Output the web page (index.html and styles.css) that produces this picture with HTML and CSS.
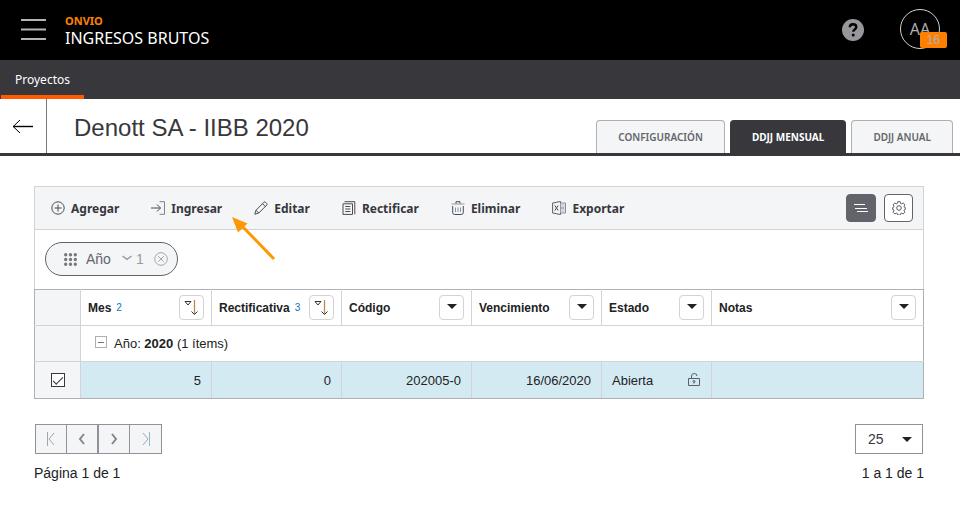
FILE: index.html
```html
<!DOCTYPE html>
<html lang="es">
<head>
    <meta charset="UTF-8">
    <meta name="viewport" content="width=device-width, initial-scale=1.0">
    <title>Onvio - Ingresos Brutos</title>
    <link rel="stylesheet" href="styles.css">
</head>
<body>
    <header class="header">
        <button type="button" class="menu-btn" aria-label="Menú">
            <svg width="25" height="22" viewBox="0 0 25 22"><path d="M0 1h25M0 10.500h25M0 20h25" stroke="#b4b4b8" stroke-width="2"/></svg>
        </button>
        <div class="brand">
            <span class="brand-name">ONVIO</span>
            <span class="brand-app">INGRESOS BRUTOS</span>
        </div>
        <button type="button" class="help-btn" aria-label="Ayuda">
            <svg width="22" height="22" viewBox="0 0 22 22"><circle cx="11" cy="11" r="11" fill="#96969b"/><path d="M7.800 8.300c0-2.200 1.500-3.100 3.200-3.100s3.300 1 3.300 2.800c0 2.300-3 2.400-3 4.700" fill="none" stroke="#000" stroke-width="2.400"/><circle cx="11.200" cy="16" r="1.500"/></svg>
        </button>
        <button type="button" class="avatar">AA<span class="badge">16</span></button>
    </header>

    <nav class="nav">
        <a href="#" class="nav-link active">Proyectos</a>
    </nav>

    <div class="title-bar">
        <a href="#" class="back" aria-label="Volver">
            <svg width="22" height="15" viewBox="0 0 22 15" fill="none" stroke="#000"><path d="M21 7.500H1" stroke-width="1.400"/><path d="M8 1L1.200 7.500 8 14"/></svg>
        </a>
        <h1>Denott SA - IIBB 2020</h1>
        <div class="tabs">
            <button type="button" class="tab">CONFIGURACIÓN</button>
            <button type="button" class="tab active">DDJJ MENSUAL</button>
            <button type="button" class="tab">DDJJ ANUAL</button>
        </div>
    </div>

    <main class="content">
        <section class="panel">
            <div class="toolbar">
                <button type="button" class="tool">
                    <svg class="icon" viewBox="0 0 14 14"><circle cx="7" cy="7" r="6.200"/><path d="M7 3.500v7M3.500 7h7"/></svg>Agregar
                </button>
                <button type="button" class="tool">
                    <svg class="icon" viewBox="0 0 14 14"><path d="M0 7h9.500M6 3.500L9.500 7 6 10.500"/><path d="M8.500.7h5v12.600h-5" stroke="#6f8798"/></svg>Ingresar
                </button>
                <button type="button" class="tool">
                    <svg class="icon" viewBox="0 0 14 14"><path d="M.8 13.200l1.200-4 8-8q.7-.6 1.400 0l1.400 1.400q.6.700 0 1.400l-8 8zM2 9.200l2.800 2.800M8.500 2.700l2.800 2.800"/></svg>Editar
                </button>
                <button type="button" class="tool">
                    <svg class="icon" viewBox="0 0 14 14"><path d="M2.500.7h10.300v12.600"/><path d="M1 2.800h9.500v10.600H1z"/><path d="M3.300 5.500h5M3.300 8h5M3.300 10.500h5"/></svg>Rectificar
                </button>
                <button type="button" class="tool">
                    <svg class="icon" viewBox="0 0 14 14"><path d="M.5 3h13" stroke="#999"/><path d="M5 2.500V.7h4v1.800M1.700 5v6.500q0 2 2 2h6.600q2 0 2-2V5"/><path d="M4.500 6.500v4.500M7 6.500v4.500M9.500 6.500v4.500" stroke="#7a95a8"/></svg>Eliminar
                </button>
                <button type="button" class="tool">
                    <svg class="icon" viewBox="0 0 14 14"><path d="M.6 2L8.500.5v13L.6 12z" stroke="#68576a"/><path d="M2.800 4.500l3.400 5M6.200 4.500l-3.400 5"/><path d="M8.500 2h5v10h-5" fill="#d9d9dc" stroke="#8791a0"/><path d="M9 7h3" stroke="#8791a0"/></svg>Exportar
                </button>
                <div class="toolbar-right">
                    <button type="button" class="square-btn dark" aria-label="Agrupar">
                        <svg width="14" height="10" viewBox="0 0 14 10" stroke="#fff"><path d="M0 1.500h11M1 5.500h12M3 8.500h11"/></svg>
                    </button>
                    <button type="button" class="square-btn" aria-label="Opciones">
                        <svg width="14" height="14" viewBox="0 0 14 14" fill="none" stroke="#5a5a60"><path d="M5.800.7h2.400l.4 1.700 1.100.5 1.500-.9 1.700 1.700-.9 1.500.5 1.100.8.200v2l-.9.200-.4 1.100.9 1.500-1.700 1.700-1.500-.9-1.100.5-.4 1.500H5.800l-.4-1.500-1.100-.5-1.500.9-1.700-1.700.9-1.500-.4-1.100-.9-.2v-2l.8-.2.5-1.100-.9-1.500L2.800 2l1.500.9 1.100-.5z"/><circle cx="7" cy="7" r="2.300"/></svg>
                    </button>
                </div>
                <svg class="pointer" width="44" height="44" viewBox="0 0 44 44"><path d="M42 42L8 7" stroke="#ff9800" stroke-width="3"/><path d="M0 0l15.500 6.500L6 15.500z" fill="#ff9800"/></svg>
            </div>

            <div class="group-area">
                <div class="chip">
                    <svg width="13" height="13" viewBox="0 0 13 13" fill="none" stroke="#77777c" stroke-width="3.400" stroke-linecap="round"><path d="M1.700 1.700h0M6.500 1.700h0M11.300 1.700h0M1.700 6.500h0M6.500 6.500h0M11.300 6.500h0M1.700 11.300h0M6.500 11.300h0M11.300 11.300h0"/></svg>
                    <span class="chip-name">Año</span>
                    <span class="chip-order"><svg width="10" height="8" viewBox="0 0 10 8" fill="none" stroke="#99999e" stroke-width="1.500"><path d="M.5 1L5 4.300 9.500 1"/></svg>1</span>
                    <button type="button" class="chip-close" aria-label="Quitar">
                        <svg width="14" height="14" viewBox="0 0 14 14" fill="none" stroke="#a5a5aa"><circle cx="7" cy="7" r="6.300"/><path d="M4.200 4.200l5.600 5.600M9.800 4.200L4.200 9.800"/></svg>
                    </button>
                </div>
            </div>

            <table class="grid">
                <colgroup>
                    <col class="col-check">
                    <col class="col-mes">
                    <col class="col-data">
                    <col class="col-data">
                    <col class="col-data">
                    <col class="col-estado">
                    <col>
                </colgroup>
                <thead>
                    <tr>
                        <th class="side"></th>
                        <th><div class="head">Mes <span class="order">2</span><button type="button" class="filter-btn" aria-label="Filtrar Mes"><svg width="16" height="18" viewBox="0 0 16 18" fill="none"><path d="M1 2.500h6L4 6z" stroke="#333"/><path d="M10.500 1v14" stroke="#b98a4d" stroke-width="1.300"/><path d="M7.500 12.500l3 3 3-3" stroke="#333"/></svg></button></div></th>
                        <th><div class="head">Rectificativa <span class="order">3</span><button type="button" class="filter-btn" aria-label="Filtrar Rectificativa"><svg width="16" height="18" viewBox="0 0 16 18" fill="none"><path d="M1 2.500h6L4 6z" stroke="#333"/><path d="M10.500 1v14" stroke="#b98a4d" stroke-width="1.300"/><path d="M7.500 12.500l3 3 3-3" stroke="#333"/></svg></button></div></th>
                        <th><div class="head">Código<button type="button" class="filter-btn" aria-label="Filtrar Código"><span class="caret"></span></button></div></th>
                        <th><div class="head">Vencimiento<button type="button" class="filter-btn" aria-label="Filtrar Vencimiento"><span class="caret"></span></button></div></th>
                        <th><div class="head">Estado<button type="button" class="filter-btn" aria-label="Filtrar Estado"><span class="caret"></span></button></div></th>
                        <th><div class="head">Notas<button type="button" class="filter-btn" aria-label="Filtrar Notas"><span class="caret"></span></button></div></th>
                    </tr>
                </thead>
                <tbody>
                    <tr>
                        <td class="side"></td>
                        <td colspan="6">
                            <div class="group">
                                <button type="button" class="collapse" aria-label="Contraer"></button>
                                <span>Año: <b>2020</b> (1 ítems)</span>
                            </div>
                        </td>
                    </tr>
                    <tr class="selected">
                        <td class="side"><input type="checkbox" class="check" aria-label="Seleccionar fila" checked></td>
                        <td class="num">5</td>
                        <td class="num">0</td>
                        <td class="num">202005-0</td>
                        <td class="num">16/06/2020</td>
                        <td>
                            <div class="state">Abierta
                                <svg width="13" height="14" viewBox="0 0 13 14" fill="none" stroke="#55606a"><path d="M.5 5.500h11v7H.5zM3.500 5.500V3q0-2.500 2.800-2.500T9 3"/><circle cx="6" cy="8.500" r="1"/><path d="M6 9.500v1"/></svg>
                            </div>
                        </td>
                        <td></td>
                    </tr>
                </tbody>
            </table>
        </section>

        <footer class="footer">
            <div>
                <div class="pager">
                    <button type="button" aria-label="Primera página"><svg width="10" height="14" viewBox="0 0 10 14"><path d="M1.500 0v14M8 1L3 7l5 6"/></svg></button>
                    <button type="button" aria-label="Página anterior"><svg class="bold" width="10" height="14" viewBox="0 0 10 14"><path d="M7 2L3 7l4 5"/></svg></button>
                    <button type="button" aria-label="Página siguiente"><svg class="bold" width="10" height="14" viewBox="0 0 10 14"><path d="M3 2l4 5-4 5"/></svg></button>
                    <button type="button" aria-label="Última página"><svg width="10" height="14" viewBox="0 0 10 14"><path d="M2 1l5 6-5 6"/><path d="M8.500 0v14" stroke="#8fb8d0"/></svg></button>
                </div>
                <p>Página 1 de 1</p>
            </div>
            <div class="footer-right">
                <div class="page-size">
                    <select aria-label="Filas por página">
                        <option>25</option>
                        <option>50</option>
                        <option>100</option>
                    </select>
                    <span class="caret"></span>
                </div>
                <p>1 a 1 de 1</p>
            </div>
        </footer>
    </main>
</body>
</html>
```

FILE: styles.css
```css
* {
    box-sizing: border-box;
}

body {
    margin: 0;
    background: #fff;
    color: #212223;
    font-family: "Liberation Sans", Arial, sans-serif;
    font-size: 13px;
}

button {
    padding: 0;
    border: none;
    background: none;
    font: inherit;
    color: inherit;
    cursor: pointer;
}

svg {
    display: block;
    flex: none;
}

.header {
    display: flex;
    align-items: center;
    height: 60px;
    padding: 0 20px 0 21px;
    background: #000;
    color: #fff;
    font-family: "Noto Sans", sans-serif;
}

.menu-btn {
    margin-right: 19px;
}

.brand {
    display: flex;
    flex-direction: column;
}

.brand-name {
    color: #ff8000;
    font-size: 11px;
    font-weight: bold;
    line-height: 16px;
}

.brand-app {
    font-size: 16px;
    line-height: 18px;
}

.help-btn {
    margin-left: auto;
    margin-right: 36px;
}

.avatar {
    position: relative;
    width: 40px;
    height: 40px;
    margin-bottom: 2px;
    border: 1px solid #d0d0d0;
    border-radius: 50%;
    color: #afafb4;
    font-size: 16px;
}

.badge {
    position: absolute;
    right: -8px;
    bottom: 0;
    width: 27px;
    border-radius: 2px;
    background: #ff8000;
    color: #afafb4;
    font-family: "Liberation Sans", Arial, sans-serif;
    font-size: 12px;
    line-height: 16px;
}

.nav {
    display: flex;
    height: 39px;
    padding-left: 1px;
    background: #37373c;
}

.nav-link {
    padding: 0 14px;
    color: #fff;
    font-family: "Noto Sans", sans-serif;
    font-size: 12px;
    line-height: 40px;
    text-decoration: none;
}

.nav-link.active {
    border-bottom: 4px solid #ff5a00;
}

.title-bar {
    display: flex;
    height: 57px;
    border-bottom: 3px solid #37373c;
}

.back {
    display: flex;
    align-items: center;
    justify-content: center;
    width: 47px;
    border-right: 1px solid #77777c;
}

h1 {
    margin: 0 0 0 27px;
    color: #37373c;
    font-size: 24px;
    font-weight: normal;
    line-height: 58px;
}

.tabs {
    display: flex;
    align-items: flex-end;
    gap: 5px;
    margin-left: auto;
    padding-right: 7px;
}

.tab {
    height: 33px;
    padding: 0 21px;
    border: 1px solid #afafb4;
    border-bottom: none;
    border-radius: 4px 4px 0 0;
    background: #f4f5f7;
    color: #63656a;
    font-family: "Noto Sans", sans-serif;
    font-size: 10px;
    font-weight: 600;
}

.tab.active {
    border-color: #37373c;
    background: #37373c;
    color: #fff;
    font-weight: bold;
}

.content {
    padding: 30px 36px 28px 34px;
}

.panel {
    border: 1px solid #d2d2d7;
    border-bottom: none;
}

.toolbar {
    position: relative;
    display: flex;
    align-items: center;
    gap: 32px;
    height: 43px;
    padding: 0 10px 0 16px;
    border-bottom: 1px solid #d2d2d7;
    background: #f4f5f7;
}

.tool {
    display: flex;
    align-items: center;
    gap: 6px;
    color: #37373c;
    font-family: "Noto Sans", sans-serif;
    font-size: 12px;
    font-weight: bold;
}

.icon {
    width: 14px;
    height: 14px;
    fill: none;
    stroke: #4b4b50;
}

.toolbar-right {
    display: flex;
    gap: 8px;
    margin-left: auto;
}

.square-btn {
    display: flex;
    align-items: center;
    justify-content: center;
    width: 29px;
    height: 28px;
    border: 1px solid #63636b;
    border-radius: 4px;
    background: #fff;
}

.square-btn.dark {
    width: 30px;
    background: #63636b;
}

.pointer {
    position: absolute;
    left: 197px;
    top: 30px;
    z-index: 1;
}

.group-area {
    padding: 12px 10px 13px;
}

.chip {
    display: inline-flex;
    align-items: center;
    height: 34px;
    padding: 0 9px 0 18px;
    border: 1px solid #63636b;
    border-radius: 17px;
    background: #f4f5f7;
    color: #63636b;
    font-size: 14px;
    vertical-align: top;
}

.chip-name {
    margin: 0 11px 0 9px;
}

.chip-order {
    display: flex;
    align-items: center;
    gap: 4px;
    margin-right: 10px;
    color: #99999e;
}

.grid {
    width: calc(100% + 2px);
    margin: 0 -1px;
    border: 1px solid #afafb4;
    border-collapse: collapse;
    table-layout: fixed;
}

.col-check {
    width: 46px;
}

.col-mes {
    width: 131px;
}

.col-data {
    width: 130px;
}

.col-estado {
    width: 110px;
}

.grid th,
.grid td {
    height: 36px;
    padding: 0 10px;
    border: 1px solid #d2d2d7;
    text-align: left;
}

.grid .selected td {
    height: 37px;
    border-bottom-color: #afafb4;
}

.grid th:first-child,
.grid td:first-child {
    border-left-color: #afafb4;
}

.grid th:last-child,
.grid td:last-child {
    border-right-color: #afafb4;
}

.grid thead th {
    padding: 0 7px;
    border-top-color: #afafb4;
    font-size: 12px;
}

.grid .side {
    padding: 0;
    background: #f4f5f7;
    text-align: center;
}

.grid .num {
    text-align: right;
}

.head {
    display: flex;
    align-items: center;
}

.order {
    margin-left: 5px;
    color: #0874b9;
    font-size: 10px;
    font-weight: normal;
}

.filter-btn {
    display: flex;
    align-items: center;
    justify-content: center;
    width: 25px;
    height: 25px;
    margin-left: auto;
    border: 1px solid #d2d2d7;
    border-radius: 4px;
}

.caret {
    border: 5px solid transparent;
    border-top-color: #212223;
    border-bottom: none;
}

.filter-btn .caret {
    margin-bottom: 2px;
}

.group {
    display: flex;
    gap: 7px;
    padding-left: 4px;
}

.collapse {
    display: flex;
    align-items: center;
    justify-content: center;
    width: 12px;
    height: 12px;
    border: 1px solid #afafb4;
}

.collapse::before {
    content: "";
    width: 6px;
    height: 1px;
    background: #77777c;
}

.selected td {
    background: #d4eaf3;
}

.check {
    appearance: none;
    display: block;
    width: 14px;
    height: 14px;
    margin: 0 auto;
    border: 1px solid #37373c;
    background: #fff;
}

.check:checked::before {
    content: "";
    display: block;
    width: 9px;
    height: 4px;
    margin: 3px 1px;
    border: solid #37373c;
    border-width: 0 0 1px 1px;
    transform: rotate(-45deg);
}

.state {
    display: flex;
    align-items: center;
    justify-content: space-between;
}

.footer {
    display: flex;
    justify-content: space-between;
    margin-top: 25px;
    font-size: 14px;
}

.footer p {
    margin: 11px 0 0;
    line-height: 16px;
}

.pager {
    display: flex;
    margin-left: 1px;
}

.pager button {
    display: flex;
    align-items: center;
    justify-content: center;
    width: 32px;
    height: 30px;
    border: 1px solid #919197;
    background: #f4f5f7;
}

.pager button:nth-child(even) {
    margin-left: -1px;
}

.pager button:last-child {
    width: 33px;
}

.pager svg {
    fill: none;
    stroke: #a5a5aa;
}

.pager .bold {
    stroke: #85858c;
    stroke-width: 2;
}

.footer-right {
    text-align: right;
}

.page-size {
    display: flex;
    align-items: center;
    width: 68px;
    height: 30px;
    margin: 0 1px 0 auto;
    padding-right: 10px;
    border: 1px solid #919197;
}

.page-size select {
    appearance: none;
    flex: 1;
    min-width: 0;
    height: 100%;
    padding: 0 0 0 12px;
    border: none;
    background: none;
    color: #37373c;
    font: inherit;
}
```
